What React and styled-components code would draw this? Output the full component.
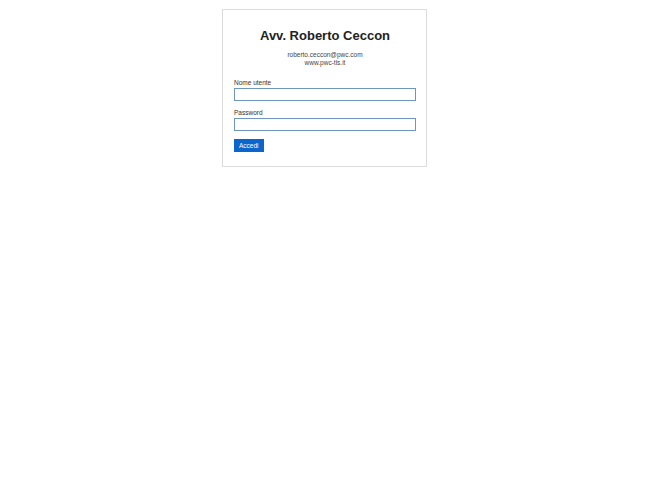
import React from "react";
import styled, { createGlobalStyle } from "styled-components";

const Global = createGlobalStyle`
  html, body { margin: 0; padding: 0; background: #fff; }
  body { font-family: "Liberation Sans", Arial, sans-serif; color: #333; }
`;

const Page = styled.div`
  display: flex;
  justify-content: center;
  padding: 9px 1px 0 0;
`;

const Card = styled.div`
  width: 182px;
  border: 1px solid #dcdcdc;
  padding: 18px 10px 14px 11px;
  display: flex;
  flex-direction: column;
`;

const Title = styled.h1`
  margin: 0;
  font-size: 13px;
  line-height: 16px;
  font-weight: bold;
  color: #222;
  text-align: center;
`;

const Contact = styled.div`
  margin-top: 7px;
  font-size: 6.5px;
  line-height: 7.5px;
  color: #444;
  text-align: center;
`;

const Form = styled.form`
  margin-top: 13px;
  display: flex;
  flex-direction: column;
`;

const Field = styled.label`
  display: flex;
  flex-direction: column;
  margin-bottom: 8px;
`;

const Label = styled.span`
  font-size: 6.5px;
  line-height: 8px;
  color: #333;
  margin-bottom: 1px;
`;

const Input = styled.input`
  box-sizing: border-box;
  width: 182px;
  height: 13px;
  border: 1px solid #6f97bd;
  padding: 0 2px;
  font-size: 7px;
  outline: none;
  margin: 0;
`;

const Button = styled.button`
  align-self: flex-start;
  margin-top: 0;
  height: 13px;
  padding: 0 5px;
  background: #0a66cc;
  color: #fff;
  border: none;
  font-family: "Liberation Sans", Arial, sans-serif;
  font-size: 6.5px;
  line-height: 13px;
`;

export default function App() {
  return (
    <>
      <Global />
      <Page>
        <Card>
          <Title>Avv. Roberto Ceccon</Title>
          <Contact>
            roberto.ceccon@pwc.com
            <br />
            www.pwc-tls.it
          </Contact>
          <Form onSubmit={(e) => e.preventDefault()}>
            <Field>
              <Label>Nome utente</Label>
              <Input type="text" />
            </Field>
            <Field>
              <Label>Password</Label>
              <Input type="password" />
            </Field>
            <Button type="submit">Accedi</Button>
          </Form>
        </Card>
      </Page>
    </>
  );
}
